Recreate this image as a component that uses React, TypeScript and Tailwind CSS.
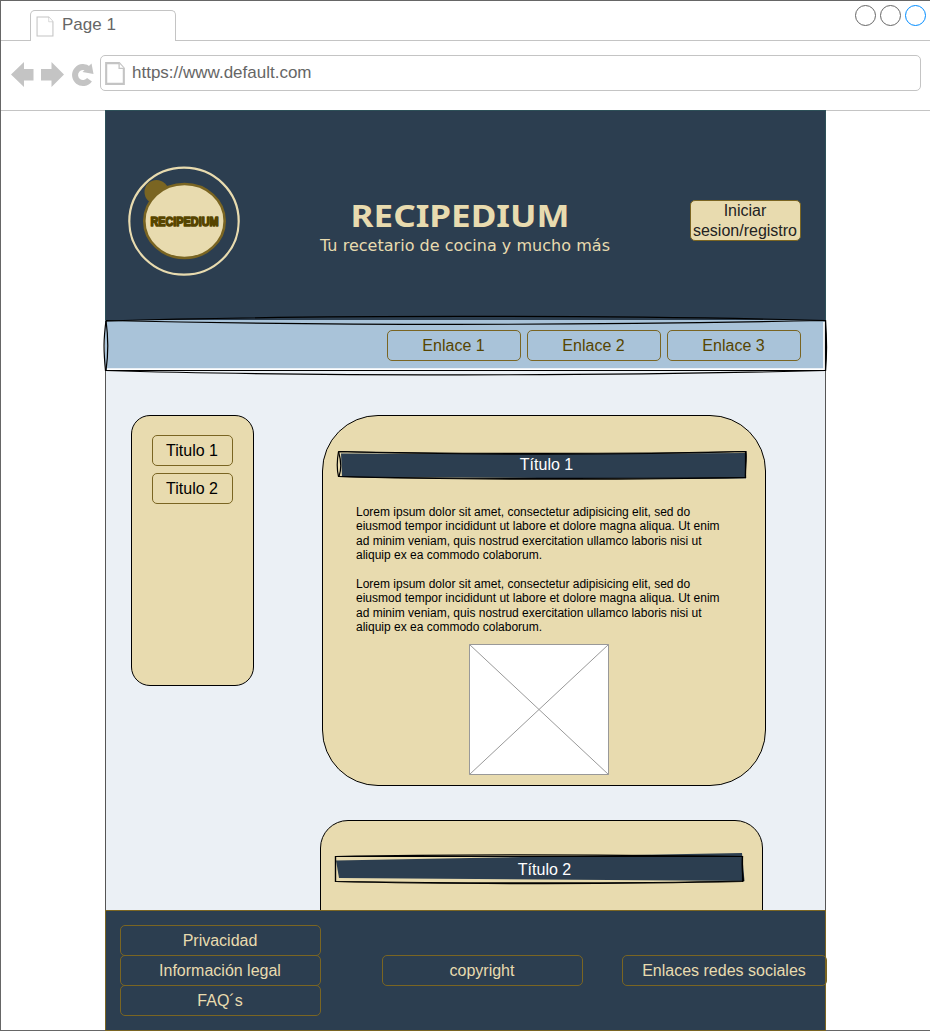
import type { ReactNode } from "react";

const lines = [
  "Lorem ipsum dolor sit amet, consectetur adipisicing elit, sed do",
  "eiusmod tempor incididunt ut labore et dolore magna aliqua. Ut enim",
  "ad minim veniam, quis nostrud exercitation ullamco laboris nisi ut",
  "aliquip ex ea commodo colaborum.",
];

function Paragraph({ className = "" }: { className?: string }) {
  return (
    <p className={`whitespace-nowrap text-[12px] leading-[14.4px] text-black ${className}`}>
      {lines.map((line) => (
        <span key={line} className="block">{line}</span>
      ))}
    </p>
  );
}

function PageIcon({ className, width }: { className: string; width: number }) {
  return (
    <svg viewBox="0 0 17 20" className={className} fill="#fff" stroke="#c4c4c4" strokeWidth={width} preserveAspectRatio="none">
      <path d="M1 1H12L16 5.5V19H1Z" />
      <path d="M12 1V5.5H16" strokeWidth={width * 0.6} />
    </svg>
  );
}

function BrowserChrome() {
  return (
    <>
      <div className="flex h-[40px] text-[#666]">
        <div className="w-[29px] border-b border-[#c4c4c4]" />
        <div className="mt-[9px] flex w-[146px] rounded-t-[5px] border-x border-t border-[#c4c4c4] pl-[5px]">
          <PageIcon className="mt-[5px] h-[21px] w-[18px]" width={1} />
          <span className="ml-[8px] mt-[4px] text-[17px] leading-[20px]">Page 1</span>
        </div>
        <div className="flex flex-1 justify-end gap-[4px] border-b border-[#c4c4c4] pr-[4px] pt-[4px]">
          <div className="size-[21px] rounded-full border border-[#666]" />
          <div className="size-[21px] rounded-full border border-[#666]" />
          <div className="size-[21px] rounded-full border border-[#008cff]" />
        </div>
      </div>
      <div className="flex h-[70px] border-b border-[#c4c4c4] pt-[14px]">
        <svg className="h-[36px] w-[99px]" viewBox="0 0 99 36" fill="#c4c4c4">
          <path d="M10 19.5L23 7V14H32.500V25.500H23V32Z" />
          <path d="M63 19.500L50.500 7V14H40V25.500H50.500V32Z" />
          <path d="M87.500 14.200A8 8 0 1 0 88.500 24.800" fill="none" stroke="#c4c4c4" strokeWidth="6" />
          <path d="M90.500 8.500L92.500 19L81.500 17Z" />
        </svg>
        <div className="flex h-[36px] w-[821px] rounded-[5px] border border-[#c4c4c4] pl-[4px]">
          <PageIcon className="mt-[6px] h-[23px] w-[20px]" width={1.8} />
          <span className="ml-[7px] mt-[7px] text-[17px] leading-[20px] text-[#666]">https://www.default.com</span>
        </div>
      </div>
    </>
  );
}

function Logo() {
  return (
    <svg className="h-[112px] w-[114px]" viewBox="127 165 114 112">
      <ellipse cx="184" cy="221.200" rx="54.700" ry="53.500" fill="none" stroke="#e8dbaf" strokeWidth="2.200" />
      <circle cx="156.500" cy="192" r="12" fill="#7a6522" />
      <ellipse cx="184.500" cy="221" rx="40.200" ry="37" fill="#e8dbaf" stroke="#7a6522" strokeWidth="2.600" />
      <text x="184.500" y="226" textAnchor="middle" textLength="68" lengthAdjust="spacingAndGlyphs" fontFamily="Liberation Sans" fontSize="13" fontWeight="700" fill="#574500" stroke="#574500" strokeWidth="1.600" strokeLinejoin="round">
        RECIPEDIUM
      </text>
    </svg>
  );
}

function LinkBox({ children, className }: { children: ReactNode; className: string }) {
  return (
    <div className={`flex h-[31px] items-center justify-center whitespace-nowrap rounded-[5px] border border-[#7a6522] pr-px text-[16px] leading-[20px] ${className}`}>
      {children}
    </div>
  );
}

function Header() {
  return (
    <header className="flex h-[210px] border border-b-0 border-[#2d5058] bg-[#2c3e50]">
      <div className="ml-[21px] mt-[54px] w-[114px]">
        <Logo />
      </div>
      <div className="ml-[64px] mt-[83px] w-[310px] text-center text-[#e8dbaf]">
        <h1 className="origin-center scale-x-[1.13] font-['Noto_Sans'] text-[31px] font-bold leading-[42px]">RECIPEDIUM</h1>
        <p className="ml-[10px] whitespace-nowrap font-['DejaVu_Sans'] text-[16px] leading-[19px] tracking-[0.03px]">Tu recetario de cocina y mucho más</p>
      </div>
      <button className="ml-[75px] mt-[89px] h-[41px] w-[111px] rounded-[5px] border border-[#7a6522] bg-[#e8dbaf] pr-px text-center text-[16px] leading-[20px] text-[#222]">
        Iniciar<br />sesion/registro
      </button>
    </header>
  );
}

function Nav() {
  return (
    <nav className="relative flex h-[51px] gap-[6px] bg-[#a9c3d9] pl-[282px] pt-[10px] text-[#574500]">
      <svg className="absolute -left-[5px] -top-[10px] h-[71px] w-[731px]" viewBox="100 310 731 71" fill="none" stroke="#000" strokeWidth="1.200">
        <path d="M107 369.200H824.200V322" stroke="#fff" strokeWidth="2" />
        <path d="M106 321C300 315 620 315 825.500 320.500V370.500C620 376 300 376.500 105.500 370.500C103.500 350 103.500 340 106 320.500Z" />
        <path d="M106 320.500C350 326 600 325 825.500 320.500C827 340 827 355 825.500 370.500H106C109 350 108 335 106 320.500" />
      </svg>
      <LinkBox className="w-[134px]">Enlace 1</LinkBox>
      <LinkBox className="w-[134px]">Enlace 2</LinkBox>
      <LinkBox className="w-[134px]">Enlace 3</LinkBox>
    </nav>
  );
}

function FirstTitle() {
  return (
    <h2 className="relative ml-[13px] h-[30px] w-[412px] text-center text-[16px] leading-[30px] text-white">
      <svg className="absolute inset-0 h-[30px] w-[412px]" viewBox="336 450 412 30" fill="none" stroke="#000" strokeWidth="1.200">
        <path d="M341 453.500L550 454L746 453V478.500L540 478L342 477Z" fill="#2c3e50" stroke="none" />
        <path d="M338.500 451.500C450 454 630 454 746 451.500C747 460 745 468 745.500 477.500C640 480 450 480 338.500 476.500C336.500 468 337 460 338.500 451.500" />
        <path d="M338.500 451.500C450 455 630 455 745.500 451.500V477.500C630 478.500 450 479 339 476.500C342 468 341 460 338.500 451.500" />
      </svg>
      <span className="relative pl-[9px]">Título 1</span>
    </h2>
  );
}

function SecondTitle() {
  return (
    <h2 className="relative ml-[13px] h-[34px] w-[412px] text-center text-[16px] leading-[36px] text-white">
      <svg className="absolute inset-0 h-[34px] w-[412px]" viewBox="334 852 412 34" fill="none" stroke="#000" strokeWidth="1.200">
        <path d="M336 860.500L742 853L744.500 881L339 878Z" fill="#2c3e50" stroke="none" />
        <path d="M335.500 856.500C460 854 630 855 742.500 856.500V881.500C630 884 460 884.500 335.500 881.500Z" />
        <path d="M335.500 856.500H742.500Q741.500 868 743.500 881C630 883.500 460 883 335.500 881.500Z" />
      </svg>
      <span className="relative pl-[9px]">Título 2</span>
    </h2>
  );
}

function Content() {
  return (
    <main className="flex h-[539px] overflow-hidden border-x border-[#555] bg-[#ebf0f5] pt-[44px] text-black">
      <aside className="ml-[25px] flex h-[271px] w-[123px] flex-col items-center gap-[7px] rounded-[19px] border border-black bg-[#e8dbaf] pt-[19px]">
        <LinkBox className="w-[81px]">Titulo 1</LinkBox>
        <LinkBox className="w-[81px]">Titulo 2</LinkBox>
      </aside>
      <div className="ml-[66px] w-[446px]">
        <article className="ml-[2px] h-[371px] w-[444px] rounded-[56px] border border-black bg-[#e8dbaf] pt-[34px]">
          <FirstTitle />
          <Paragraph className="ml-[33px] mt-[25px]" />
          <Paragraph className="ml-[33px] mt-[14.4px]" />
          <svg className="ml-[146px] mt-[8px] h-[132px] w-[140px]" viewBox="0 0 140 132" fill="#fff" stroke="#999">
            <path d="M.5 1.500H139.500V131.500H.5ZL139.500 131.500M139.500 1.500L.5 131.500" />
          </svg>
        </article>
        <article className="mt-[34px] h-[160px] w-[443px] rounded-[28px] border border-black bg-[#e8dbaf] pt-[31px]">
          <SecondTitle />
        </article>
      </div>
    </main>
  );
}

function Footer() {
  return (
    <footer className="flex h-[121px] w-[721px] border border-[#7a6522] bg-[#2c3e50] text-[#e8dbaf]">
      <div className="ml-[14px] mt-[14px] w-[201px]">
        <LinkBox className="w-[201px]">Privacidad</LinkBox>
        <LinkBox className="-mt-px w-[201px]">Información legal</LinkBox>
        <LinkBox className="-mt-px w-[201px]">FAQ´s</LinkBox>
      </div>
      <LinkBox className="ml-[61px] mt-[44px] w-[201px]">copyright</LinkBox>
      <LinkBox className="-mr-[2px] ml-[39px] mt-[44px] w-[205px] shrink-0 pr-[3px]">Enlaces redes sociales</LinkBox>
    </footer>
  );
}

export default function App() {
  return (
    <div className="h-[1031px] w-[930px] border-y border-l border-[#666] bg-white font-['Liberation_Sans',sans-serif]">
      <BrowserChrome />
      <div className="relative ml-[104px] -mt-px w-[721px]">
        <Header />
        <Nav />
        <Content />
        <Footer />
      </div>
    </div>
  );
}
